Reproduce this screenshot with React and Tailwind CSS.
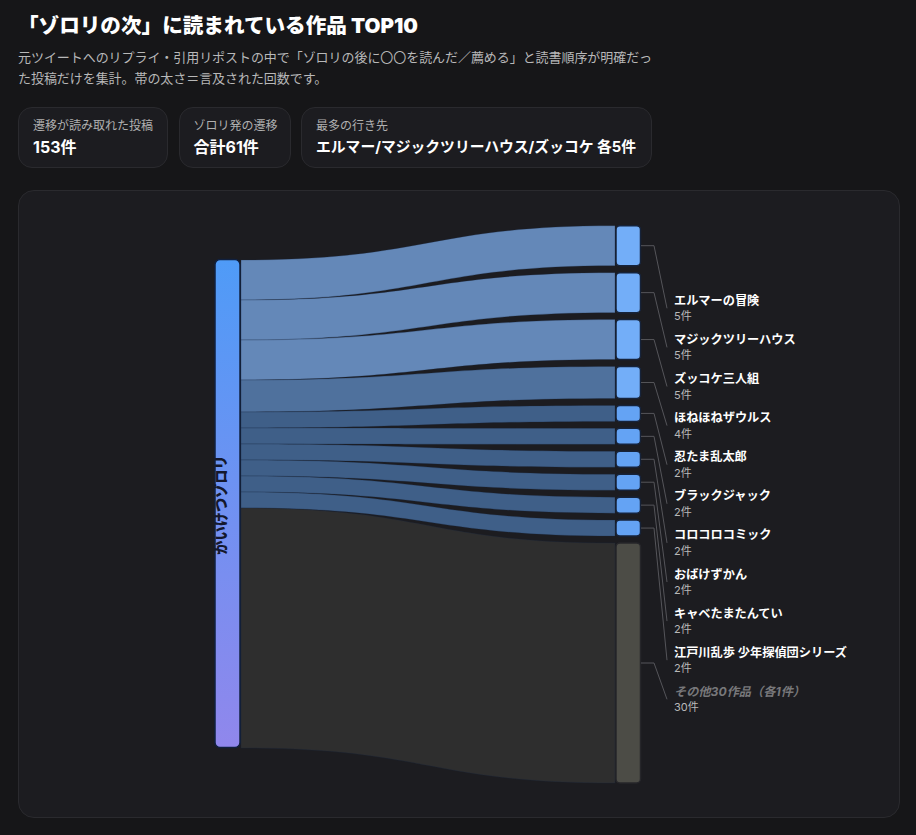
const FONT = { fontFamily: 'Inter, "Noto Sans CJK JP", sans-serif' }

const stats = [
  { label: '遷移が読み取れた投稿', value: '153件', width: 'w-[150px]', size: 'text-[16px]' },
  { label: 'ゾロリ発の遷移', value: '合計61件', width: 'w-[112px]', size: 'text-[16px]' },
  { label: '最多の行き先', value: 'エルマー/マジックツリーハウス/ズッコケ 各5件', width: 'w-[351px]', size: 'text-[14.8px]' },
]

const works = [
  { name: 'エルマーの冒険', count: 5 },
  { name: 'マジックツリーハウス', count: 5 },
  { name: 'ズッコケ三人組', count: 5 },
  { name: 'ほねほねザウルス', count: 4 },
  { name: '忍たま乱太郎', count: 2 },
  { name: 'ブラックジャック', count: 2 },
  { name: 'コロコロコミック', count: 2 },
  { name: 'おばけずかん', count: 2 },
  { name: 'キャベたまたんてい', count: 2 },
  { name: '江戸川乱歩 少年探偵団シリーズ', count: 2 },
  { name: 'その他30作品（各1件）', count: 30, other: true },
]

const UNIT = 8
const GAP = 6.93

function linkColor(work) {
  if (work.other) return '#2e2e2e'
  if (work.count === 5) return '#6488b8'
  if (work.count === 4) return '#4f719d'
  return '#3f5f88'
}

function buildRows() {
  let left = 260
  let right = 225.7
  return works.map((work, i) => {
    const h = work.count * UNIT
    const row = { ...work, left, right, h, labelY: 308.3 + i * 39.1 }
    left += h
    right += h + GAP
    return row
  })
}

function SankeyChart() {
  const rows = buildRows()
  const x0 = 241
  const x1 = 615
  const mid = (x0 + x1) / 2

  return (
    <svg viewBox="19 191 880 626" className="block h-[626px] w-[880px]" style={FONT}>
      <defs>
        <linearGradient id="source-fill" x1="0" y1="0" x2="0" y2="1">
          <stop offset="0" stopColor="#4f9bf7" />
          <stop offset="1" stopColor="#9087ec" />
        </linearGradient>
      </defs>

      {rows.map((r) => (
        <path
          key={`link-${r.name}`}
          fill={linkColor(r)}
          stroke="#1c2a44"
          strokeOpacity="0.45"
          strokeWidth="0.6"
          d={`M${x0} ${r.left}C${mid} ${r.left} ${mid} ${r.right} ${x1} ${r.right}L${x1} ${r.right + r.h}C${mid} ${r.right + r.h} ${mid} ${r.left + r.h} ${x0} ${r.left + r.h}Z`}
        />
      ))}

      <rect x="215" y="259.5" width="25" height="488" rx="5" fill="url(#source-fill)" stroke="#10203f" strokeWidth="1.5" />
      <text
        transform="translate(220.5 505) rotate(-90)"
        textAnchor="middle"
        dominantBaseline="central"
        fontSize="14.2"
        fontWeight="900"
        fill="#14182c"
      >
        かいけつゾロリ
      </text>

      {rows.map((r) => {
        const cy = r.right + r.h / 2
        return (
          <g key={r.name}>
            <rect
              x="616"
              y={r.right}
              width="24.5"
              height={r.h}
              rx="4"
              fill={r.other ? '#4c4c46' : r.count === 2 ? '#64a3f4' : '#73aef8'}
              stroke={r.other ? '#26262a' : '#16233a'}
              strokeWidth="1.5"
            />
            <path d={`M641 ${cy}L654 ${cy}L667 ${r.labelY}`} fill="none" stroke="#55555a" strokeWidth="1" />
            <text
              x="674"
              y={r.labelY - 8}
              dominantBaseline="central"
              fontSize="12.2"
              fontWeight="700"
              fontStyle={r.other ? 'italic' : 'normal'}
              fill={r.other ? '#77777a' : '#ffffff'}
            >
              {r.name}
            </text>
            <text x="674" y={r.labelY + 8} dominantBaseline="central" fontSize="11" fill="#b8b8b8">
              {r.count}件
            </text>
          </g>
        )
      })}
    </svg>
  )
}

export default function App() {
  return (
    <div className="min-h-[835px] bg-[#161618] px-[18px] pt-[11px]" style={FONT}>
      <h1 className="text-[20.6px] leading-[30px] font-black text-white">「ゾロリの次」に読まれている作品 TOP10</h1>
      <p className="mt-[6px] w-[640px] text-[13px] leading-[21px] tracking-[-0.06px] text-[#b8b8b8]">
        元ツイートへのリプライ・引用リポストの中で「ゾロリの後に〇〇を読んだ／薦める」と読書順序が明確だった投稿だけを集計。帯の太さ＝言及された回数です。
      </p>

      <div className="mt-[18px] flex gap-[10.5px]">
        {stats.map((stat) => (
          <div
            key={stat.label}
            className={`h-[61px] rounded-[14px] border border-[#2a2a2e] bg-[#1c1c20] px-[14px] pt-[9px] ${stat.width}`}
          >
            <div className="text-[12px] leading-[18px] whitespace-nowrap text-[#b0b0b0]">{stat.label}</div>
            <div className={`mt-[1px] leading-[22px] font-bold whitespace-nowrap text-white ${stat.size}`}>{stat.value}</div>
          </div>
        ))}
      </div>

      <div className="mt-[22px] h-[628px] w-[882px] rounded-[16px] border border-[#2a2a2e] bg-[#1c1c20]">
        <SankeyChart />
      </div>
    </div>
  )
}
